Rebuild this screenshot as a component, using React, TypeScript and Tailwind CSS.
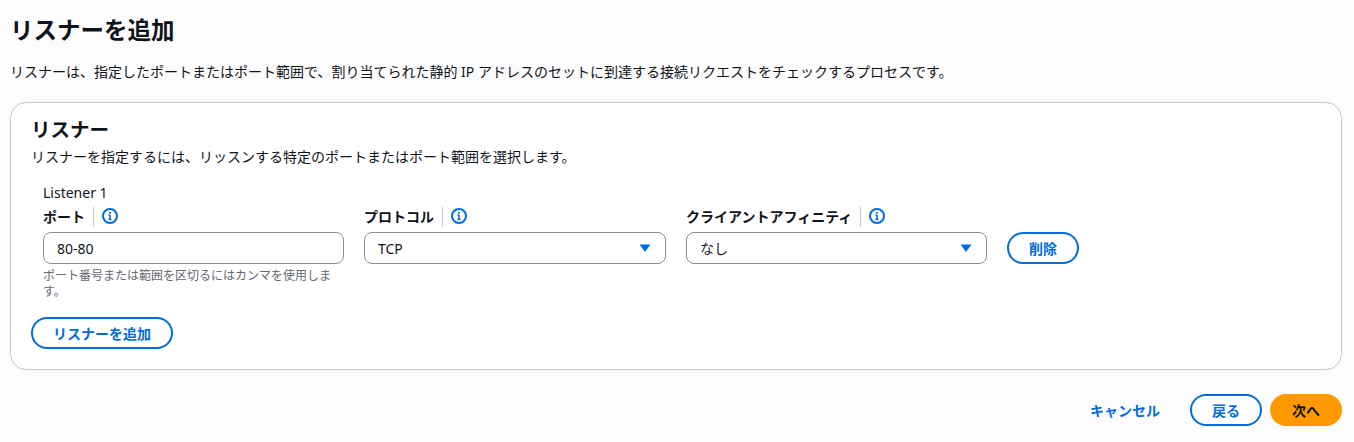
const FONT = "font-['Noto_Sans','Noto_Sans_CJK_JP',sans-serif]";

function InfoIcon() {
  return (
    <svg width="16" height="16" viewBox="0 0 16 16" fill="none" stroke="#006ce0" strokeWidth="2">
      <circle cx="8" cy="8" r="7" />
      <path d="M8 11.5V7M6.5 7H8M6.5 11.5h3" strokeWidth="1.6" />
      <path d="M8 4v1.6" />
    </svg>
  );
}

function Caret() {
  return (
    <svg width="12" height="8" viewBox="0 0 12 8" fill="#006ce0" className="shrink-0">
      <path d="M0.5 0.5h11L6 8z" />
    </svg>
  );
}

function FieldLabel({ text }: { text: string }) {
  return (
    <div className="flex h-[20px] items-center mb-[5px]">
      <span className="text-[14px] leading-[20px] font-bold text-[#0f141a]">{text}</span>
      <span className="ml-[8px] mr-[8px] h-[20px] w-px bg-[#c6c6cd]" />
      <span className="-mt-[3px]"><InfoIcon /></span>
    </div>
  );
}

function SelectBox({ value }: { value: string }) {
  return (
    <div className="flex h-[32px] items-center justify-between rounded-[8px] border border-[#8c8c94] bg-white pl-[13px] pr-[14px] text-[14px] text-[#0f141a]">
      <span>{value}</span>
      <Caret />
    </div>
  );
}

function OutlineButton({ children, className }: { children: React.ReactNode; className: string }) {
  return (
    <button className={"flex h-[32px] items-center justify-center rounded-[20px] border-2 border-[#006ce0] bg-white text-[14px] font-bold text-[#006ce0] " + className}>
      {children}
    </button>
  );
}

export default function App() {
  return (
    <div className={FONT + " h-[442px] w-[1354px] overflow-hidden bg-[#fcfcfd] px-[10px] text-[#0f141a]"}>
      <h1 className="pt-[14px] text-[23.5px] leading-[32px] font-bold">リスナーを追加</h1>
      <p className="mt-[16px] text-[14px] leading-[20px]">
        リスナーは、指定したポートまたはポート範囲で、割り当てられた静的 IP アドレスのセットに到達する接続リクエストをチェックするプロセスです。
      </p>
      <section className="mt-[20px] h-[268px] w-[1332px] rounded-[16px] border border-[#c6c6cd] bg-white pl-[20px] pt-[14px]">
        <h2 className="text-[19.5px] leading-[26px] font-bold">リスナー</h2>
        <p className="mt-[4px] text-[14px] leading-[20px]">リスナーを指定するには、リッスンする特定のポートまたはポート範囲を選択します。</p>
        <div className="mt-[16px] pl-[12px]">
          <div className="text-[14px] leading-[20px] mb-[4px]">Listener 1</div>
          <div className="flex items-start gap-[20px]">
            <div className="w-[301px]">
              <FieldLabel text="ポート" />
              <div className="flex h-[32px] items-center rounded-[8px] border border-[#8c8c94] bg-white pl-[13px] text-[14px]">80-80</div>
              <p className="mt-[4px] text-[12px] leading-[16px] text-[#656871]">ポート番号または範囲を区切るにはカンマを使用します。</p>
            </div>
            <div className="w-[302px]">
              <FieldLabel text="プロトコル" />
              <SelectBox value="TCP" />
            </div>
            <div className="w-[301px]">
              <FieldLabel text="クライアントアフィニティ" />
              <SelectBox value="なし" />
            </div>
            <OutlineButton className="mt-[25px] w-[72px]">削除</OutlineButton>
          </div>
        </div>
        <OutlineButton className="mt-[17px] w-[142px]">リスナーを追加</OutlineButton>
      </section>
      <div className="mt-[24px] flex w-[1332px] items-center justify-end">
        <button className="mr-[30px] text-[14px] font-bold text-[#006ce0]">キャンセル</button>
        <OutlineButton className="w-[72px]">戻る</OutlineButton>
        <button className="ml-[8px] flex h-[32px] w-[72px] items-center justify-center rounded-[20px] bg-[#ff9900] text-[14px] font-bold text-[#0f141a]">次へ</button>
      </div>
    </div>
  );
}
